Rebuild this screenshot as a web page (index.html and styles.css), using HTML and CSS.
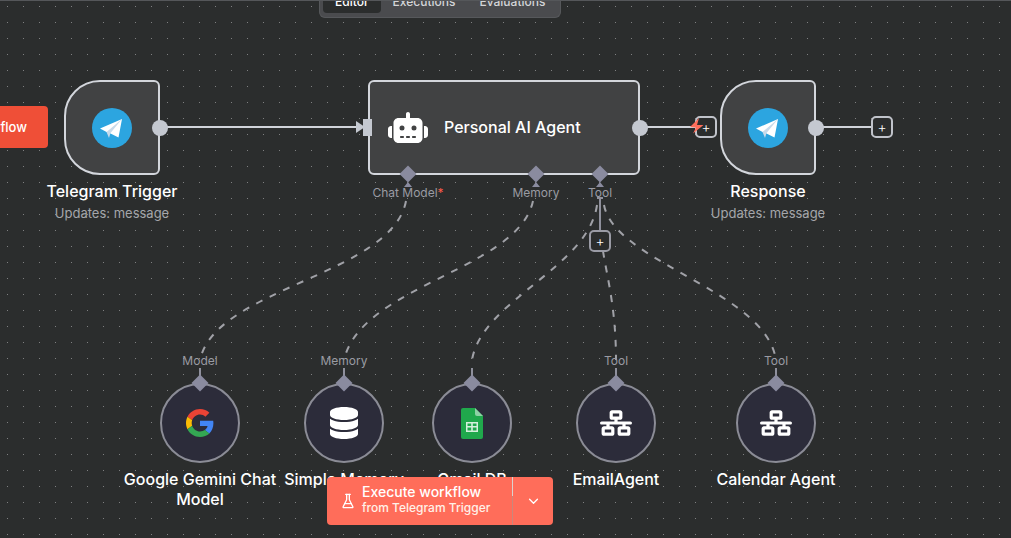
FILE: index.html
```html
<!DOCTYPE html>
<html lang="en">
<head>
  <meta charset="UTF-8">
  <meta name="viewport" content="width=device-width, initial-scale=1.0">
  <title>Personal AI Agent - Workflow</title>
  <link rel="stylesheet" href="styles.css">
</head>
<body>
  <div class="canvas">
    <!-- connections -->
    <svg class="wires" width="1011" height="538" viewBox="0 0 1011 538">
      <path class="wire" d="M160 127H360" />
      <path class="wire" d="M640 127H696" />
      <path class="wire" d="M816 127H872" />
      <path class="wire thin" d="M600 198V231M597 198H603" />
      <path class="stub" d="M404 187L408 182L412 187ZM532 187L536 182L540 187ZM596 187L600 182L604 187Z" />
      <path class="dash" d="M406 201C392 275 215 288 200 360" />
      <path class="dash" d="M533 201C518 270 361 285 344 360" />
      <path class="dash" d="M597 205C588 268 482 300 472 360" />
      <path class="dash" d="M601 236C604 268 616 300 616 360" />
      <path class="dash" d="M604 205C614 262 766 291 776 360" />
      <path class="wire thin" d="M200 368V378M344 368V378M472 368V378M616 368V378M776 368V378" />
    </svg>

    <div class="tabs">
      <span class="tab active">Editor</span>
      <span class="tab">Executions</span>
      <span class="tab">Evaluations</span>
    </div>

    <div class="cut-button">flow</div>

    <div class="node node-trigger">
      <div class="box box-trigger">
        <svg class="tg-icon" viewBox="0 0 40 40">
          <circle cx="20" cy="20" r="20" fill="#2ca5e0" />
          <path d="M8 20.5L30 11L26.5 29.5L18.5 25.5L15.5 24.5Z" fill="#fff" />
          <path d="M14.5 24L30 11L18.5 25L17 30Z" fill="#c8daea" />
        </svg>
        <span class="out-dot"></span>
      </div>
      <div class="name">Telegram Trigger</div>
      <div class="sub">Updates: message</div>
    </div>

    <div class="node node-agent">
      <div class="box box-agent">
        <span class="in-arrow"></span>
        <span class="in-port"></span>
        <svg class="robot" viewBox="0 0 640 512" fill="#fff">
          <path d="M320 0c17.7 0 32 14.3 32 32V96H472c44.2 0 80 35.8 80 80V416c0 44.2-35.8 80-80 80H168c-44.2 0-80-35.8-80-80V176c0-44.2 35.8-80 80-80H288V32c0-17.7 14.3-32 32-32zM208 384c-8.8 0-16 7.2-16 16s7.2 16 16 16h32c8.8 0 16-7.2 16-16s-7.2-16-16-16H208zm96 0c-8.8 0-16 7.2-16 16s7.2 16 16 16h32c8.8 0 16-7.2 16-16s-7.2-16-16-16H304zm96 0c-8.8 0-16 7.2-16 16s7.2 16 16 16h32c8.8 0 16-7.2 16-16s-7.2-16-16-16H400zM264 256a40 40 0 1 0 -80 0 40 40 0 1 0 80 0zm152 40a40 40 0 1 0 0-80 40 40 0 1 0 0 80zM48 224H64V416H48c-26.5 0-48-21.5-48-48V272c0-26.5 21.5-48 48-48zm544 0c26.5 0 48 21.5 48 48v96c0 26.5-21.5 48-48 48H576V224h16z" />
        </svg>
        <span class="agent-title">Personal AI Agent</span>
        <span class="out-dot"></span>
      </div>
      <div class="slot slot-model"><span class="diamond"></span><span class="slot-label">Chat Model<i>*</i></span></div>
      <div class="slot slot-memory"><span class="diamond"></span><span class="slot-label">Memory</span></div>
      <div class="slot slot-tool"><span class="diamond"></span><span class="slot-label">Tool</span></div>
    </div>

    <div class="node node-response">
      <div class="box box-trigger">
        <svg class="tg-icon" viewBox="0 0 40 40">
          <circle cx="20" cy="20" r="20" fill="#2ca5e0" />
          <path d="M8 20.5L30 11L26.5 29.5L18.5 25.5L15.5 24.5Z" fill="#fff" />
          <path d="M14.5 24L30 11L18.5 25L17 30Z" fill="#c8daea" />
        </svg>
        <span class="out-dot"></span>
      </div>
      <div class="name">Response</div>
      <div class="sub">Updates: message</div>
    </div>

    <span class="plus plus-agent">+</span>
    <svg class="bolt" viewBox="0 0 14 16"><path d="M9 0L0 9L6 9.5L3 15.5L13.500 7L7 7Z" fill="#ff6d5a" /></svg>
    <span class="plus plus-response">+</span>
    <span class="plus plus-tool">+</span>

    <div class="node sub-node sub-gemini">
      <span class="slot-label top-label">Model</span>
      <div class="round">
        <span class="diamond"></span>
        <svg class="google" viewBox="0 0 48 48">
          <path fill="#ea4335" d="M24 9.5c3.54 0 6.71 1.22 9.21 3.6l6.85-6.85C35.9 2.38 30.47 0 24 0 14.62 0 6.51 5.38 2.56 13.22l7.98 6.19C12.43 13.72 17.74 9.5 24 9.5z" />
          <path fill="#4285f4" d="M46.98 24.55c0-1.57-.15-3.09-.38-4.55H24v9.02h12.94c-.58 2.96-2.26 5.48-4.78 7.18l7.73 6c4.51-4.18 7.09-10.36 7.09-17.65z" />
          <path fill="#fbbc05" d="M10.53 28.59c-.5-1.45-.78-2.99-.78-4.59s.27-3.14.78-4.59l-7.98-6.19C.92 16.46 0 20.12 0 24c0 3.88.92 7.54 2.56 10.78l7.97-6.19z" />
          <path fill="#34a853" d="M24 48c6.48 0 11.93-2.13 16.09-5.81l-7.73-6c-2.15 1.45-4.92 2.3-8.36 2.3-6.26 0-11.57-4.22-13.47-9.91l-7.98 6.19C6.51 42.62 14.62 48 24 48z" />
        </svg>
      </div>
      <div class="name">Google Gemini Chat Model</div>
    </div>

    <div class="node sub-node sub-memory">
      <span class="slot-label top-label">Memory</span>
      <div class="round">
        <span class="diamond"></span>
        <svg class="database" viewBox="0 0 448 512" fill="#fff">
          <path d="M448 80v48c0 44.2-100.3 80-224 80S0 172.2 0 128V80C0 35.8 100.3 0 224 0S448 35.8 448 80zM393.2 214.7c20.8-7.4 39.9-16.9 54.8-28.6V288c0 44.2-100.3 80-224 80S0 332.2 0 288V186.1c14.9 11.8 34 21.2 54.8 28.6C99.7 230.7 159.500 240 224 240s124.3-9.3 169.2-25.3zM0 346.1c14.9 11.8 34 21.2 54.8 28.6C99.7 390.7 159.5 400 224 400s124.3-9.3 169.2-25.3c20.8-7.4 39.9-16.9 54.8-28.6V432c0 44.2-100.3 80-224 80S0 476.2 0 432V346.1z" />
        </svg>
      </div>
      <div class="name">Simple Memory</div>
    </div>

    <div class="node sub-node sub-sheet">
      <div class="round round-no-label">
        <span class="diamond"></span>
        <svg class="sheet" viewBox="0 0 22 31">
          <path d="M2 0H14L22 8V29a2 2 0 0 1-2 2H2a2 2 0 0 1-2-2V2a2 2 0 0 1 2-2Z" fill="#20a84c" />
          <path d="M14 0L22 8H16a2 2 0 0 1-2-2Z" fill="#8ed1a5" />
          <path d="M5 14H17V24H5ZM6.500 15.500V18H10.200V15.500ZM11.800 15.500V18H15.500V15.500ZM6.500 19.500V22.500H10.200V19.500ZM11.800 19.500V22.500H15.500V19.500Z" fill="#d5efdd" fill-rule="evenodd" />
        </svg>
      </div>
      <div class="name">Gmail DB</div>
    </div>

    <div class="node sub-node sub-email">
      <span class="slot-label top-label">Tool</span>
      <div class="round">
        <span class="diamond"></span>
        <svg class="network" viewBox="0 0 640 512" fill="#fff">
          <path d="M256 64H384v64H256V64zM240 0c-26.5 0-48 21.5-48 48v96c0 26.5 21.5 48 48 48h48v32H32c-17.7 0-32 14.3-32 32s14.3 32 32 32h96v32H80c-26.5 0-48 21.5-48 48v96c0 26.5 21.5 48 48 48H240c26.5 0 48-21.5 48-48V368c0-26.5-21.5-48-48-48H192V288H448v32H400c-26.5 0-48 21.5-48 48v96c0 26.5 21.5 48 48 48H560c26.5 0 48-21.5 48-48V368c0-26.5-21.5-48-48-48H512V288h96c17.7 0 32-14.3 32-32s-14.3-32-32-32H352V192h48c26.5 0 48-21.5 48-48V48c0-26.5-21.5-48-48-48H240zM96 448V384H224v64H96zm320-64H544v64H416V384z" />
        </svg>
      </div>
      <div class="name">EmailAgent</div>
    </div>

    <div class="node sub-node sub-calendar">
      <span class="slot-label top-label">Tool</span>
      <div class="round">
        <span class="diamond"></span>
        <svg class="network" viewBox="0 0 640 512" fill="#fff">
          <path d="M256 64H384v64H256V64zM240 0c-26.5 0-48 21.5-48 48v96c0 26.5 21.5 48 48 48h48v32H32c-17.7 0-32 14.3-32 32s14.3 32 32 32h96v32H80c-26.5 0-48 21.5-48 48v96c0 26.5 21.5 48 48 48H240c26.5 0 48-21.5 48-48V368c0-26.5-21.5-48-48-48H192V288H448v32H400c-26.5 0-48 21.5-48 48v96c0 26.5 21.5 48 48 48H560c26.5 0 48-21.5 48-48V368c0-26.5-21.5-48-48-48H512V288h96c17.7 0 32-14.3 32-32s-14.3-32-32-32H352V192h48c26.5 0 48-21.5 48-48V48c0-26.5-21.5-48-48-48H240zM96 448V384H224v64H96zm320-64H544v64H416V384z" />
        </svg>
      </div>
      <div class="name">Calendar Agent</div>
    </div>

    <div class="execute">
      <div class="execute-main">
        <svg class="flask" viewBox="0 0 24 24" fill="none" stroke="#fff" stroke-width="2" stroke-linecap="round" stroke-linejoin="round">
          <path d="M10 2v7.527a2 2 0 0 1-.211.896L4.72 20.55a1 1 0 0 0 .9 1.45h12.76a1 1 0 0 0 .9-1.45l-5.069-10.127A2 2 0 0 1 14 9.527V2" />
          <path d="M8.500 2h7" />
          <path d="M7 16h10" />
        </svg>
        <div class="execute-text">
          <div class="execute-title">Execute workflow</div>
          <div class="execute-sub">from Telegram Trigger</div>
        </div>
      </div>
      <span class="execute-divider"></span>
      <div class="execute-more">
        <svg class="chevron" viewBox="0 0 12 8" fill="none" stroke="#fff" stroke-width="1.500" stroke-linecap="round" stroke-linejoin="round"><path d="M1.500 1.500L6 6L10.500 1.500" /></svg>
      </div>
    </div>
  </div>
</body>
</html>
```

FILE: styles.css
```css
body {
  margin: 0;
  overflow: hidden;
  font-family: Inter, "Liberation Sans", sans-serif;
  color: white;
  background: #2b2d2d;
}
.canvas {
  position: relative;
  width: 1011px;
  height: 538px;
  overflow: hidden;
  border-top: 1px solid #55575a;
  box-sizing: border-box;
  background-color: #2b2d2d;
  background-image: radial-gradient(circle at 0.5px 0.5px, #7f8081 0.5px, transparent 0.75px);
  background-size: 16px 16px;
  background-position: 7px 5px;
}
.wires {
  position: absolute;
  top: -1px;
  left: 0;
}
.wire {
  fill: none;
  stroke: #d0d3d9;
  stroke-width: 2;
}
.wire.thin {
  stroke: #8f909c;
}
.stub {
  fill: #8a8b9f;
}
.dash {
  fill: none;
  stroke: #a0a1a7;
  stroke-width: 2;
  stroke-dasharray: 7 8;
}

/* top tabs */
.tabs {
  position: absolute;
  top: -1px;
  left: 319px;
  width: 242px;
  height: 18px;
  box-sizing: border-box;
  padding: 0 3px 4px;
  display: flex;
  align-items: flex-end;
  background: #4a4b4e;
  border: 1px solid #56585b;
  border-top: 0;
  border-radius: 0 0 6px 6px;
  overflow: hidden;
}
.tab {
  flex: none;
  line-height: 22px;
  height: 14px;
  padding: 0 12px;
  font-size: 12px;
  font-weight: 500;
  color: #d4d5d8;
  display: flex;
  align-items: flex-end;
}
.tab.active {
  color: #fff;
  background: #2b2d2d;
  border-radius: 0 0 4px 4px;
}

.cut-button {
  position: absolute;
  top: 105px;
  left: -20px;
  width: 68px;
  height: 42px;
  box-sizing: border-box;
  padding-right: 21px;
  display: flex;
  align-items: center;
  justify-content: flex-end;
  font-size: 13px;
  font-weight: 500;
  background: #ef4f37;
  border-radius: 4px;
}

/* nodes */
.node {
  position: absolute;
  display: flex;
  flex-direction: column;
  align-items: center;
}
.node-trigger {
  top: 79px;
  left: 12px;
  width: 200px;
}
.node-response {
  top: 79px;
  left: 668px;
  width: 200px;
}
.node-agent {
  top: 79px;
  left: 368px;
  width: 272px;
}
.box {
  position: relative;
  box-sizing: border-box;
  height: 95px;
  background: #414243;
  border: 2px solid #d3d6dc;
  display: flex;
  align-items: center;
}
.box-trigger {
  width: 96px;
  justify-content: center;
  border-radius: 36px 6px 6px 36px;
}
.box-agent {
  width: 272px;
  border-radius: 6px;
  padding-left: 18px;
}
.tg-icon {
  width: 40px;
  height: 40px;
}
.out-dot {
  position: absolute;
  top: 38px;
  right: -10px;
  width: 16px;
  height: 16px;
  border-radius: 50%;
  background: #c4c8d0;
}
.in-port {
  position: absolute;
  top: 37px;
  left: -7px;
  width: 9px;
  height: 17px;
  background: #c4c8d0;
}
.in-arrow {
  position: absolute;
  top: 39px;
  left: -14px;
  width: 0;
  height: 0;
  border-left: 9px solid #c4c8d0;
  border-top: 6.500px solid transparent;
  border-bottom: 6.500px solid transparent;
}
.robot {
  width: 40px;
  height: 32px;
  flex: none;
}
.agent-title {
  margin-left: 16px;
  padding-bottom: 2px;
  font-size: 16px;
  font-weight: 500;
}
.name {
  margin-top: 6px;
  font-size: 16px;
  line-height: 20px;
  font-weight: 500;
  text-align: center;
}
.sub {
  margin-top: 3px;
  font-size: 13px;
  line-height: 18px;
  color: #a4a6aa;
}

/* agent slots */
.slot {
  position: absolute;
  top: 88px;
  display: flex;
  flex-direction: column;
  align-items: center;
  width: 90px;
}
.slot-model {
  left: -5px;
}
.slot-memory {
  left: 123px;
}
.slot-tool {
  left: 187px;
}
.diamond {
  display: block;
  width: 12px;
  height: 12px;
  background: #8a8b9f;
  transform: rotate(45deg);
}
.slot-label {
  font-size: 12px;
  line-height: 14px;
  color: #9a9ba3;
}
.slot .slot-label {
  margin-top: 6px;
}
.slot-label i {
  font-style: normal;
  color: #ff5a4a;
}

/* round sub nodes */
.sub-node {
  top: 353px;
  width: 160px;
}
.top-label {
  height: 14px;
}
.round {
  position: relative;
  box-sizing: border-box;
  width: 80px;
  height: 80px;
  margin-top: 15px;
  display: flex;
  align-items: center;
  justify-content: center;
  border-radius: 50%;
  background: #2c2c3a;
  border: 2px solid #8b8c96;
}
.round-no-label {
  margin-top: 29px;
}
.round .diamond {
  position: absolute;
  top: -8px;
  left: 32px;
}
.sub-node .name {
  margin-top: 6px;
}
.sub-gemini {
  left: 120px;
}
.sub-memory {
  left: 264px;
}
.sub-sheet {
  left: 392px;
}
.sub-email {
  left: 536px;
}
.sub-calendar {
  left: 696px;
}
.google {
  width: 28px;
  height: 28px;
}
.database {
  width: 28px;
  height: 32px;
}
.sheet {
  width: 22px;
  height: 31px;
}
.network {
  width: 32px;
  height: 26px;
}

/* add buttons */
.plus {
  position: absolute;
  box-sizing: border-box;
  width: 22px;
  height: 22px;
  display: flex;
  align-items: center;
  justify-content: center;
  font-size: 14px;
  font-weight: 300;
  line-height: 1;
  color: #fff;
  background: #2b2d2d;
  border: 2px solid #c0c3ca;
  border-radius: 5px;
}
.plus-agent {
  top: 115px;
  left: 695px;
}
.plus-response {
  top: 115px;
  left: 871px;
}
.plus-tool {
  top: 229px;
  left: 589px;
  border-color: #9a9ba5;
}
.bolt {
  position: absolute;
  top: 117px;
  left: 690px;
  width: 14px;
  height: 16px;
}

/* run bar */
.execute {
  position: absolute;
  top: 476px;
  left: 327px;
  width: 226px;
  height: 48px;
  display: flex;
  background: #ff6d5a;
  border-radius: 4px;
}
.execute-main {
  flex: 1;
  display: flex;
  align-items: center;
  padding-left: 13px;
  gap: 6px;
}
.execute-text {
  padding-bottom: 3px;
}
.execute-divider {
  width: 1px;
  background: linear-gradient(#dcd2ce 40%, #c9877b 40%);
}
.execute-more {
  width: 40px;
  display: flex;
  align-items: center;
  justify-content: center;
}
.flask {
  width: 16px;
  height: 16px;
}
.execute-title {
  font-size: 14px;
  font-weight: 500;
  line-height: 17px;
}
.execute-sub {
  font-size: 12px;
  font-weight: 500;
  line-height: 16px;
  color: #fff1e8;
}
.chevron {
  width: 11px;
  height: 7px;
}
```
